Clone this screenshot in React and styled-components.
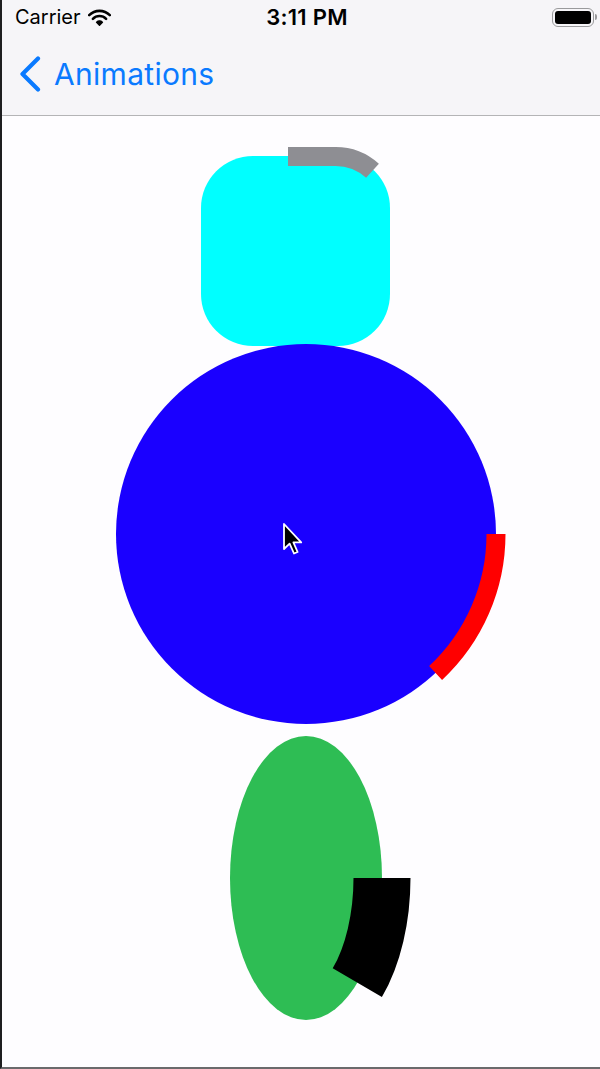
import React from 'react';
import styled, { createGlobalStyle } from 'styled-components';

const GlobalStyle = createGlobalStyle`
  html, body {
    margin: 0;
    padding: 0;
    background: #fefdff;
  }
  * {
    box-sizing: border-box;
  }
`;

const Screen = styled.div`
  width: 600px;
  height: 1069px;
  display: flex;
  flex-direction: column;
  background: #fefdff;
  border-left: 2px solid #1e1e20;
  border-bottom: 2px solid #6a6a6c;
  overflow: hidden;
  font-family: Inter, "Liberation Sans", sans-serif;
`;

const Header = styled.header`
  background: #f6f5f8;
  border-bottom: 1px solid #b4b4b6;
  height: 116px;
  display: flex;
  flex-direction: column;
`;

const StatusBar = styled.div`
  height: 40px;
  display: grid;
  grid-template-columns: 1fr auto 1fr;
  align-items: center;
  padding: 0 3px 6px 13px;
  color: #000;
`;

const Carrier = styled.div`
  display: flex;
  align-items: center;
  gap: 7px;
  font-size: 20px;
  font-weight: 400;
`;

const Clock = styled.div`
  font-size: 22px;
  font-weight: 600;
  letter-spacing: 0.3px;
  margin-left: 2px;
`;

const BatteryWrap = styled.div`
  justify-self: end;
  display: flex;
  align-items: center;
  gap: 1px;
`;

const BatteryBody = styled.div`
  width: 42px;
  height: 19px;
  border: 1.5px solid #9a9a9c;
  border-radius: 6px;
  padding: 2px;
  display: flex;
`;

const BatteryFill = styled.div`
  flex: 1;
  background: #000;
  border-radius: 3px;
`;

const BatteryNub = styled.div`
  width: 2px;
  height: 6px;
  background: #9a9a9c;
  border-radius: 0 2px 2px 0;
`;

const NavBar = styled.div`
  flex: 1;
  display: flex;
  align-items: center;
  padding: 0 0 8px 16px;
  gap: 12px;
  color: #0a7aff;
`;

const BackTitle = styled.span`
  font-size: 30px;
  font-weight: 400;
  letter-spacing: 0.3px;
`;

const Content = styled.main`
  flex: 1;
  display: flex;
  flex-direction: column;
  align-items: flex-start;
  padding-top: 40px;
`;

const Shape = styled.div`
  position: relative;
  flex-shrink: 0;
  width: ${(p) => p.w}px;
  height: ${(p) => p.h}px;
  margin-left: ${(p) => p.left}px;
  margin-top: ${(p) => p.top || 0}px;
  background: ${(p) => p.color};
  border-radius: ${(p) => p.radius};
`;

const Overlay = styled.svg`
  position: absolute;
  left: 0;
  top: 0;
  overflow: visible;
`;

const Cursor = styled.svg`
  position: absolute;
  left: 166px;
  top: 178px;
`;

const Wifi = () => (
  <svg width="23" height="17" viewBox="0 0 23 17">
    <path d="M1.2 6.2 A14.5 14.5 0 0 1 21.8 6.2" fill="none" stroke="#000" strokeWidth="2.6" strokeLinecap="round" />
    <path d="M4.9 9.8 A9.3 9.3 0 0 1 18.1 9.8" fill="none" stroke="#000" strokeWidth="2.6" strokeLinecap="round" />
    <path d="M8.6 13.2 A4.2 4.2 0 0 1 14.4 13.2 L11.5 16.3 Z" fill="#000" stroke="#000" strokeWidth="1.4" strokeLinejoin="round" />
  </svg>
);

const Chevron = () => (
  <svg width="24" height="36" viewBox="0 0 24 36">
    <path d="M20 2.5 L4.5 18 L20 33.5" fill="none" stroke="#0a7aff" strokeWidth="4.2" strokeLinecap="round" strokeLinejoin="round" />
  </svg>
);

export default function App() {
  return (
    <>
      <GlobalStyle />
      <Screen>
        <Header>
          <StatusBar>
            <Carrier>
              Carrier
              <Wifi />
            </Carrier>
            <Clock>3:11 PM</Clock>
            <BatteryWrap>
              <BatteryBody>
                <BatteryFill />
              </BatteryBody>
              <BatteryNub />
            </BatteryWrap>
          </StatusBar>
          <NavBar>
            <Chevron />
            <BackTitle>Animations</BackTitle>
          </NavBar>
        </Header>

        <Content>
          <Shape w={189} h={190} left={199} color="#00ffff" radius="52px">
            <Overlay width="189" height="190">
              <path
                d="M87 0.5 H134 A55 55 0 0 1 171.5 14.8"
                fill="none"
                stroke="#8e8e93"
                strokeWidth="19"
              />
            </Overlay>
          </Shape>

          <Shape w={380} h={380} left={114} top={-2} color="#1a00ff" radius="50%">
            <Overlay width="380" height="380">
              <path
                d="M380 190 A190 190 0 0 1 319.6 329"
                fill="none"
                stroke="#ff0000"
                strokeWidth="19"
              />
            </Overlay>
            <Cursor width="22" height="34" viewBox="0 0 22 34">
              <path
                d="M2 2 L2 27 L7.6 21.6 L12 31.5 L15.6 30 L11.4 20.4 L19.2 20.4 Z"
                fill="#000"
                stroke="#fff"
                strokeWidth="1.8"
                strokeLinejoin="round"
              />
            </Cursor>
          </Shape>

          <Shape w={152} h={284} left={228} top={12} color="#2ebd54" radius="50%">
            <Overlay width="152" height="284">
              <path
                d="M152 142 A76 142 0 0 1 127.3 246.7"
                fill="none"
                stroke="#000"
                strokeWidth="57"
              />
            </Overlay>
          </Shape>
        </Content>
      </Screen>
    </>
  );
}
